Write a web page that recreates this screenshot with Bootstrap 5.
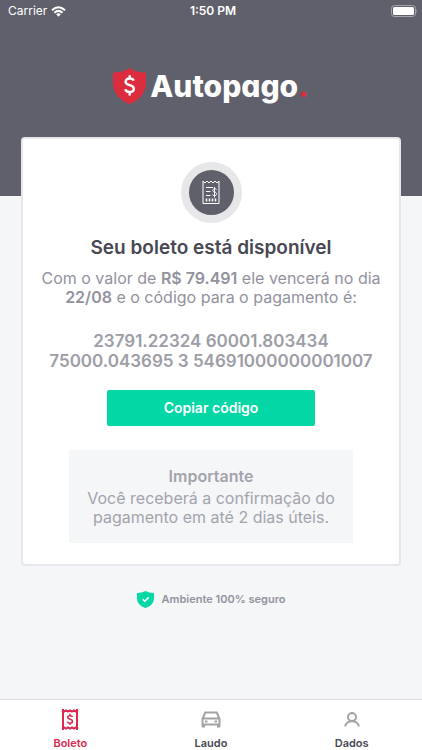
<!DOCTYPE html>
<html lang="pt-BR">
<head>
<meta charset="utf-8">
<meta name="viewport" content="width=device-width, initial-scale=1">
<title>Autopago</title>
<link rel="stylesheet" href="https://cdn.jsdelivr.net/npm/bootstrap@5.3.0/dist/css/bootstrap.min.css">
<style>
body{font-family:Inter,"Liberation Sans",sans-serif;background:#f5f6f8;color:#92929d}
strong{font-weight:600}
.hero{background:#60606c;height:196px;color:#fff}
.status{height:22px;font-size:12px;line-height:22px}
.status-time{font-weight:600}
.brand{margin-top:44px;font-size:30px;line-height:40px;font-weight:800;color:#fff;font-feature-settings:"cv11"}
.brand-dot{color:#dc2d42}
.ticket{margin:-59px 21px 0;border:2px solid #e6e7ed;border-radius:4px;padding:23px 16px 21px}
.ticket-icon{width:61px;height:61px;border:8px solid #e7e7ea;background:#60606c}
.ticket h1{font-size:19px;line-height:24px;font-weight:600;color:#484852;margin:13px 0 9px}
.copy-text{font-size:16px;line-height:19px}
.code{font-size:17px;line-height:20px;font-weight:600;color:#9d9da6}
.btn-copy{width:208px;height:36px;font-size:14px;line-height:20px;font-weight:600;border-radius:2px;padding:0;--bs-btn-color:#fff;--bs-btn-bg:#02d7a5;--bs-btn-border-color:#02d7a5;--bs-btn-hover-color:#fff;--bs-btn-hover-bg:#02c597}
.code{margin-bottom:19px}
.notice{width:284px;background:#f5f6f8;color:#a3a3ac;padding:16px 8px}
.notice h2{font-size:16px;line-height:20px;font-weight:600;margin-bottom:3px}
.secure{font-size:11px;line-height:20px;font-weight:600;margin-top:23px}
.tabs{background:#fff;border-top:1px solid #dcdee2;height:51px}
.tabs a{font-size:11px;line-height:14px;font-weight:600;color:#484852;text-decoration:none;padding-top:9px;gap:6px}
.tabs a.active{color:#dd2850}
</style>
<script src="https://cdn.jsdelivr.net/npm/bootstrap@5.3.0/dist/js/bootstrap.bundle.min.js"></script>
</head>
<body class="min-vh-100 d-flex flex-column">
<header class="hero">
  <div class="status row g-0">
    <div class="col d-flex align-items-center gap-1 ps-2"><span>Carrier</span>
      <svg width="15" height="11" viewBox="0 0 15 11" fill="none" stroke="#fff" stroke-width="2" aria-hidden="true"><path d="M1 4.2Q7.500-1.800 14 4.200M3.400 6.700Q7.500 3 11.600 6.700"/><path d="M5.200 8.200Q7.500 6.400 9.800 8.200L7.500 10.700z" fill="#fff" stroke="none"/></svg>
    </div>
    <div class="col-auto status-time">1:50 PM</div>
    <div class="col d-flex align-items-center justify-content-end pe-1">
      <svg width="27" height="12" viewBox="0 0 27 12" aria-hidden="true"><rect x=".5" y=".5" width="24" height="11" rx="3" fill="none" stroke="#a6a6ae"/><rect x="2" y="2" width="21" height="8" rx="1.5" fill="#fff"/><path d="M25.400 4q1.400 2 0 4z" fill="#a6a6ae"/></svg>
    </div>
  </div>
  <div class="brand d-flex justify-content-center align-items-center gap-1">
    <svg width="33" height="36" viewBox="0 0 33 36" aria-hidden="true"><path d="M16.500 0Q23 4.500 33 4.500V15C33 25 26 32.500 16.500 36 7 32.500 0 25 0 15V4.500Q10 4.500 16.500 0z" fill="#dc2d3f"/><path d="M20.700 12.600Q20 10.500 16.700 10.500 12.600 10.500 12.600 13.800C12.600 18.500 20.800 15.800 20.800 20.800Q20.800 24 16.700 24 12.900 24 12.300 21.300M16.700 7.200V10.500M16.700 24V27.600" fill="none" stroke="#fff" stroke-width="2.400"/></svg>
    <span>Autopago<span class="brand-dot">.</span></span>
  </div>
</header>
<main class="flex-grow-1">
  <section class="ticket bg-white text-center d-flex flex-column align-items-center">
    <div class="ticket-icon rounded-circle d-flex align-items-center justify-content-center">
      <svg width="18" height="25" viewBox="0 0 18 25" fill="none" stroke="#fff" aria-hidden="true"><path d="M1 1L3 3 5 1 7 3 9 1 11 3 13 1 15 3 17 1V23.500H1z"/><path d="M4 7.500H11M4 11.500H8.500M4 15.500H8.500M14.500 9.700Q14 8.700 12.700 8.700C10.200 8.700 10.400 11.800 12.600 12 15.200 12.300 15.200 15.700 12.500 15.700Q11 15.700 10.500 14.500M12.500 7V17.500"/><path d="M4.500 18.500V21.500M7.500 18.500V21.500M10.500 18.500V21.500M13.500 18.500V21.500" stroke-width="1.500"/></svg>
    </div>
    <h1>Seu boleto está disponível</h1>
    <p class="copy-text mb-4">Com o valor de <strong>R$ 79.491</strong> ele vencerá no dia <strong>22/08</strong> e o código para o pagamento é:</p>
    <div class="code">23791.22324 60001.803434<br>75000.043695 3 54691000000001007</div>
    <button type="button" class="btn btn-copy mb-4">Copiar código</button>
    <div class="notice"><h2>Importante</h2><p class="copy-text mb-0">Você receberá a confirmação do pagamento em até 2 dias úteis.</p></div>
  </section>
  <div class="secure d-flex justify-content-center align-items-center gap-2">
    <svg width="17" height="17" viewBox="0 0 17 17" aria-hidden="true"><path d="M8.500 0Q12 2 17 2V7C17 12 13.500 15.500 8.500 17 3.500 15.500 0 12 0 7V2Q5 2 8.500 0z" fill="#02d7a5"/><path d="M5.700 8.300L7.800 10.300 11.700 6.400" fill="none" stroke="#fff" stroke-width="1.500"/></svg>
    <span>Ambiente 100% seguro</span>
  </div>
</main>
<nav class="tabs row g-0" aria-label="Principal">
  <a href="#boleto" class="col active d-flex flex-column align-items-center" aria-current="page">
    <svg width="18" height="21" viewBox="0 0 18 21" fill="none" stroke="#dd2850" stroke-width="2" aria-hidden="true"><path d="M2 0V21M16 0V21"/><path d="M1 1.300L3 2.500 5 1.300 7 2.500 9 1.300 11 2.500 13 1.300 15 2.500 17 1.300M1 19.700L3 18.500 5 19.700 7 18.500 9 19.700 11 18.500 13 19.700 15 18.500 17 19.700"/><path d="M11.500 8Q11 6.700 9 6.700 6.700 6.700 6.700 8.500C6.700 11 11.500 9.600 11.500 12.300Q11.500 14.200 9 14.200 6.800 14.200 6.400 12.600M9 4.800V7M9 14V16" stroke-width="1.600"/></svg>Boleto</a>
  <a href="#laudo" class="col d-flex flex-column align-items-center">
    <svg width="20" height="21" viewBox="0 0 20 21" fill="none" stroke="#a3a3a5" stroke-width="2" aria-hidden="true"><path d="M1.500 17.500V10L4.200 3.500H15.800L18.500 10V17.500M1.500 9.500H18.500M1.500 15.500H18.500"/><path d="M2.500 15V18.500M17.500 15V18.500" stroke-width="3"/><path d="M4 12.500H6.500M13.500 12.500H16"/></svg>Laudo</a>
  <a href="#dados" class="col d-flex flex-column align-items-center">
    <svg width="18" height="21" viewBox="0 0 18 21" fill="none" stroke="#a3a3a5" stroke-width="2" aria-hidden="true"><circle cx="9" cy="8" r="4"/><path d="M2 17.500Q3.500 12.300 9 12.300T16 17.500"/></svg>Dados</a>
</nav>
</body>
</html>
